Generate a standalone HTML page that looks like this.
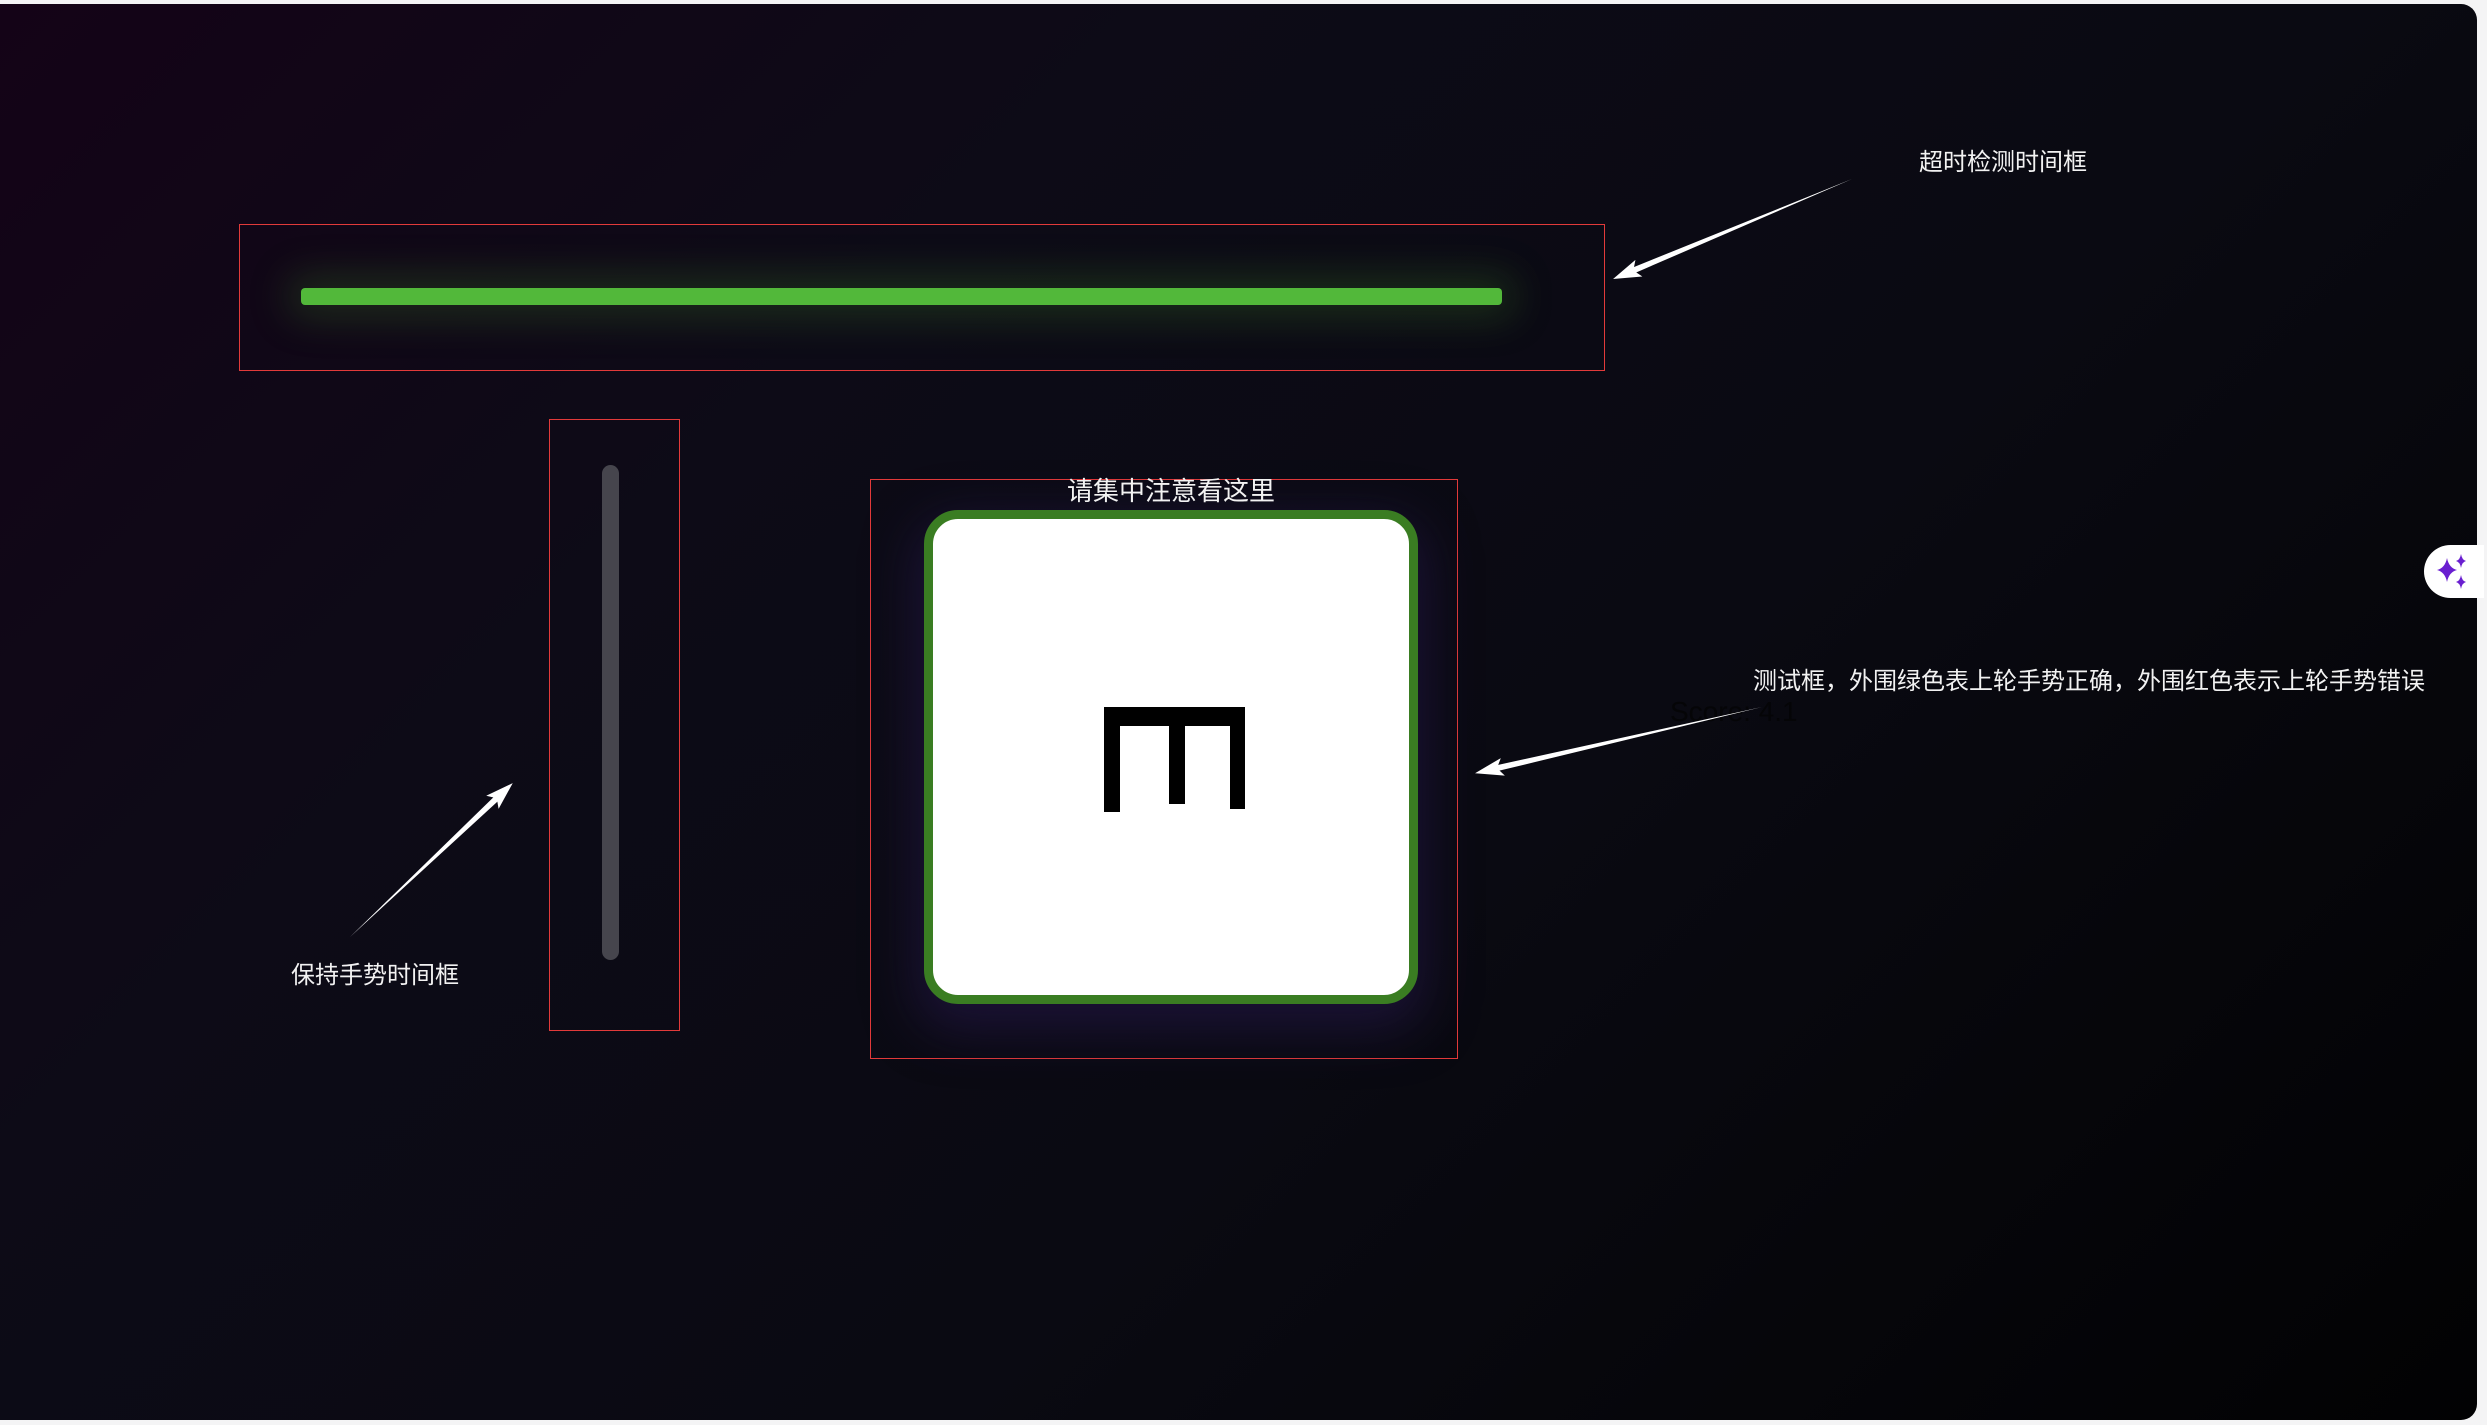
<!DOCTYPE html>
<html><head><meta charset="utf-8"><style>
*{margin:0;padding:0;box-sizing:border-box}
html,body{width:2487px;height:1425px;overflow:hidden;background:#f4f4f5}
#bg{position:absolute;left:0;top:4px;width:2477px;height:1416px;border-radius:0 16px 16px 0;
background:linear-gradient(135deg,#140317 0%,#0d0b17 30%,#0a0a12 60%,#020203 100%);overflow:hidden}
.a{position:absolute}
.t{position:absolute;color:#f2f2f2;font-family:"Liberation Sans","Noto Sans CJK SC",sans-serif;white-space:nowrap;line-height:1}
.rb{position:absolute;border:1.5px solid #e23a3a}
</style></head><body>
<div id="bg"></div>
<div class="rb" style="left:239px;top:224px;width:1366px;height:147px"></div>
<div class="a" style="left:301px;top:288px;width:1201px;height:17px;background:#52b83a;border-radius:4px;box-shadow:0 0 40px 12px rgba(70,140,40,0.28)"></div>
<div class="rb" style="left:549px;top:419px;width:131px;height:612px"></div>
<div class="a" style="left:602px;top:465px;width:17px;height:495px;background:#46454d;border-radius:9px"></div>
<div class="rb" style="left:870px;top:479px;width:588px;height:580px"></div>
<div class="a" style="left:924px;top:510px;width:494px;height:494px;background:#fff;border:9px solid #3a7d22;border-radius:34px;box-shadow:0 18px 50px 8px rgba(40,25,80,0.55)"></div>
<div class="a" style="left:1104px;top:707px;width:141px;height:19px;background:#000"></div>
<div class="a" style="left:1104px;top:707px;width:16px;height:105px;background:#000"></div>
<div class="a" style="left:1169px;top:707px;width:16px;height:97px;background:#000"></div>
<div class="a" style="left:1230px;top:707px;width:15px;height:102px;background:#000"></div>
<div class="t" style="left:1067px;top:478px;font-size:26px">请集中注意看这里</div>
<div class="t" style="left:1919px;top:151px;font-size:24px">超时检测时间框</div>
<div class="t" style="left:291px;top:964px;font-size:24px">保持手势时间框</div>
<div class="t" style="left:1753px;top:670px;font-size:24px">测试框，外围绿色表上轮手势正确，外围红色表示上轮手势错误</div>
<div class="t" style="left:1670px;top:698px;font-size:28px;color:#050507">Score: 4.1</div>
<svg class="a" style="left:0;top:0" width="2487" height="1425">
<g fill="#fff">
<g transform="translate(1852,179) rotate(157.3)"><polygon points="0,0 239,-3 239,3"/><polygon points="259,0 231,-9 237,0 231,9"/></g>
<g transform="translate(350,937) rotate(-43.4)"><polygon points="0,0 204,-3 204,3"/><polygon points="224,0 196,-9 202,0 196,9"/></g>
<g transform="translate(1762,707) rotate(167)"><polygon points="0,0 274,-3 274,3"/><polygon points="294.5,0 266,-9 272,0 266,9"/></g>
</g>
</svg>
<div class="a" style="left:2424px;top:545px;width:60px;height:53px;background:#fff;border-radius:27px 0 0 27px"></div>
<svg class="a" style="left:2424px;top:545px" width="53" height="53">
<g fill="#6a1fd0">
<path d="M23 13 Q25 23 33 25 Q25 27 23 37 Q21 27 13 25 Q21 23 23 13Z"/>
<path d="M37 9 Q38 15 42 16 Q38 17 37 23 Q36 17 32 16 Q36 15 37 9Z"/>
<path d="M37 30 Q38 36 42 37 Q38 38 37 44 Q36 38 32 37 Q36 36 37 30Z"/>
</g>
</svg>
</body></html>
